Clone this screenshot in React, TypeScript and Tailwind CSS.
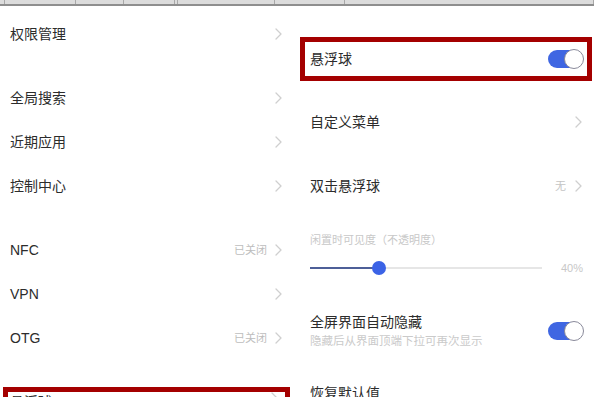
import { FC } from 'react';

const Chevron: FC<{}> = () => (
    <svg width="7" height="12" viewBox="0 0 7 12" className="shrink-0">
        <path d="M1 1 L6 6 L1 11" fill="none" stroke="#cfcfcf" strokeWidth="1.3" strokeLinecap="round" strokeLinejoin="round" />
    </svg>
);

const Toggle: FC<{}> = () => (
    <div className="relative w-[35px] h-[18px] rounded-full bg-[#3f66e2] shrink-0">
        <div className="absolute right-[-1px] top-[-1px] w-[20px] h-[20px] rounded-full bg-white border border-[#8a8a9a]" />
    </div>
);

const LeftRow: FC<{ label: string; value?: string }> = ({ label, value }) => (
    <div className="flex items-center h-[44px] pl-[10px] pr-[12px]">
        <span className="flex-1 text-[14px] text-[#2c2c2c]">{ label }</span>
        { value && <span className="text-[11px] text-[#bdbdbd] mr-[8px]">{ value }</span> }
        <Chevron />
    </div>
);

const RightRow: FC<{ label: string; value?: string }> = ({ label, value }) => (
    <div className="flex items-center h-[44px] pl-[16px] pr-[12px]">
        <span className="flex-1 text-[14px] text-[#2c2c2c]">{ label }</span>
        { value && <span className="text-[11px] text-[#c4c4c4] mr-[9px]">{ value }</span> }
        <Chevron />
    </div>
);

export default function App()
{
    const ticks = [ 5, 71, 48, 51, 3, 97, 70, 249 ];

    return (
        <div className="w-[594px] h-[397px] overflow-hidden bg-white" style={{ fontFamily: '"Liberation Sans", "Noto Sans CJK SC", sans-serif' }}>
            <div className="flex h-[6px] bg-[#dcdcdc] border-b-2 border-[#8e8e8e]">
                { ticks.map((w, i) => (
                    <div key={ i } className="h-full border-r border-[#a8a8a8]" style={{ width: w }} />
                )) }
            </div>
            <div className="flex">
                <div className="flex flex-col w-[294px]">
                    <div className="mt-[6px]"><LeftRow label="权限管理" /></div>
                    <div className="mt-[20px]">
                        <LeftRow label="全局搜索" />
                        <LeftRow label="近期应用" />
                        <LeftRow label="控制中心" />
                    </div>
                    <div className="mt-[20px]">
                        <LeftRow label="NFC" value="已关闭" />
                        <LeftRow label="VPN" />
                        <LeftRow label="OTG" value="已关闭" />
                    </div>
                    <div className="mt-[27px] ml-[3px] w-[287px] h-[44px] border-[5px] border-[#a40000] flex items-start pl-[2px] pr-[7px]">
                        <span className="flex-1 text-[14px] leading-[20px] text-[#2c2c2c]">悬浮球</span>
                        <Chevron />
                    </div>
                </div>
                <div className="flex flex-col w-[300px]">
                    <div className="mt-[31px] ml-[6px] mr-[2px] h-[44px] border-[5px] border-[#a40000] flex items-center pl-[5px] pr-[4px]">
                        <span className="flex-1 text-[14px] text-[#2c2c2c]">悬浮球</span>
                        <Toggle />
                    </div>
                    <div className="mt-[19px]"><RightRow label="自定义菜单" /></div>
                    <div className="mt-[20px]"><RightRow label="双击悬浮球" value="无" /></div>
                    <div className="mt-[20px] h-[24px] flex items-center pl-[16px]">
                        <span className="text-[11px] text-[#c8c8c8]">闲置时可见度（不透明度）</span>
                    </div>
                    <div className="mt-[4px] h-[24px] flex items-center pl-[16px] pr-[11px]">
                        <div className="relative w-[232px] h-[2px] bg-[#e6e6e6]">
                            <div className="absolute left-0 top-0 h-[2px] w-[69px] bg-[#4e5f98]" />
                            <div className="absolute left-[62px] top-[-6px] w-[14px] h-[14px] rounded-full bg-[#3b63e6]" />
                        </div>
                        <span className="ml-auto text-[11px] text-[#c8c8c8]">40%</span>
                    </div>
                    <div className="mt-[32px] flex items-center pl-[16px] pr-[11px]">
                        <div className="flex-1 flex flex-col">
                            <span className="h-[20px] leading-[20px] text-[14px] text-[#2c2c2c]">全屏界面自动隐藏</span>
                            <span className="h-[18px] leading-[18px] text-[11.5px] text-[#cacaca]">隐藏后从界面顶端下拉可再次显示</span>
                        </div>
                        <Toggle />
                    </div>
                    <div className="mt-[21px] flex items-center h-[44px] pl-[16px] pr-[12px]">
                        <span className="flex-1 text-[14px] text-[#2c2c2c]">恢复默认值</span>
                    </div>
                </div>
            </div>
        </div>
    );
}
